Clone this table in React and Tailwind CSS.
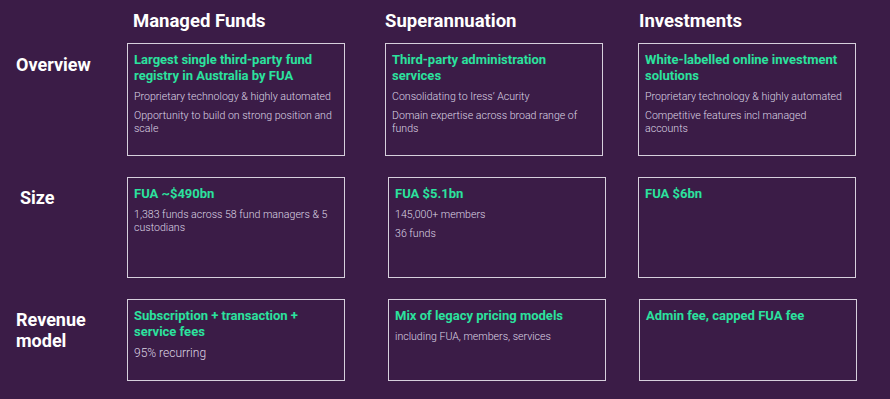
export default function App() {
  const font = { fontFamily: "Roboto, 'Liberation Sans', sans-serif" };
  const box = "border border-[#d6cfdc] px-[6px] pt-[8px]";
  const title = "text-[13px] font-bold leading-[16px] text-[#2be29e]";
  const body = "text-[10.6px] font-light leading-[13px] text-[#ddd5e4] mt-[6px]";
  const label = "text-[18px] font-bold leading-[21px] text-white";
  const head = "pt-[9px] text-[18.5px] font-bold leading-[24px] text-white";
  return (
    <div className="w-[890px] h-[399px] bg-[#3b1c47] overflow-hidden" style={font}>
      <div className="grid grid-cols-[127px_258px_253px_218px]">
        <div />
        <div className={`${head} pl-[6px]`}>Managed Funds</div>
        <div className={head}>Superannuation</div>
        <div className={`${head} pl-[1px]`}>Investments</div>

        {/* Overview row */}
        <div className="pl-[16px] pt-[21px]">
          <div className={label}>Overview</div>
        </div>
        <div className={`${box} mt-[10px] w-[218px] h-[113px]`}>
          <div className={title}>Largest single third-party fund registry in Australia by FUA</div>
          <div className={body}>Proprietary technology &amp; highly automated</div>
          <div className={body}>Opportunity to build on strong position and scale</div>
        </div>
        <div className={`${box} mt-[10px] w-[218px] h-[113px]`}>
          <div className={title}>Third-party administration services</div>
          <div className={body}>Consolidating to Iress’ Acurity</div>
          <div className={body}>Domain expertise across broad range of funds</div>
        </div>
        <div className={`${box} mt-[10px] w-[218px] h-[113px]`}>
          <div className={title}>White-labelled online investment solutions</div>
          <div className={body}>Proprietary technology &amp; highly automated</div>
          <div className={body}>Competitive features incl managed accounts</div>
        </div>

        {/* Size row */}
        <div className="pl-[20px] pt-[31px]">
          <div className={label}>Size</div>
        </div>
        <div className={`${box} mt-[21px] w-[218px] h-[101px]`}>
          <div className={title}>FUA ~$490bn</div>
          <div className={body}>1,383 funds across 58 fund managers &amp; 5 custodians</div>
        </div>
        <div className={`${box} mt-[21px] ml-[3px] w-[218px] h-[101px]`}>
          <div className={title}>FUA $5.1bn</div>
          <div className={body}>145,000+ members</div>
          <div className={body}>36 funds</div>
        </div>
        <div className={`${box} mt-[21px] w-[218px] h-[101px]`}>
          <div className={title}>FUA $6bn</div>
        </div>

        {/* Revenue row */}
        <div className="pl-[16px] pt-[31px]">
          <div className={label}>Revenue<br />model</div>
        </div>
        <div className={`${box} mt-[21px] w-[218px] h-[82px]`}>
          <div className={title}>Subscription + transaction + service fees</div>
          <div className="text-[12px] font-light leading-[14px] text-[#ddd5e4] mt-[6px]">95% recurring</div>
        </div>
        <div className={`${box} mt-[21px] ml-[3px] w-[218px] h-[82px]`}>
          <div className={title}>Mix of legacy pricing models</div>
          <div className={body}>including FUA, members, services</div>
        </div>
        <div className={`${box} mt-[21px] ml-[1px] w-[218px] h-[82px]`}>
          <div className={title}>Admin fee, capped FUA fee</div>
        </div>
      </div>
    </div>
  );
}
